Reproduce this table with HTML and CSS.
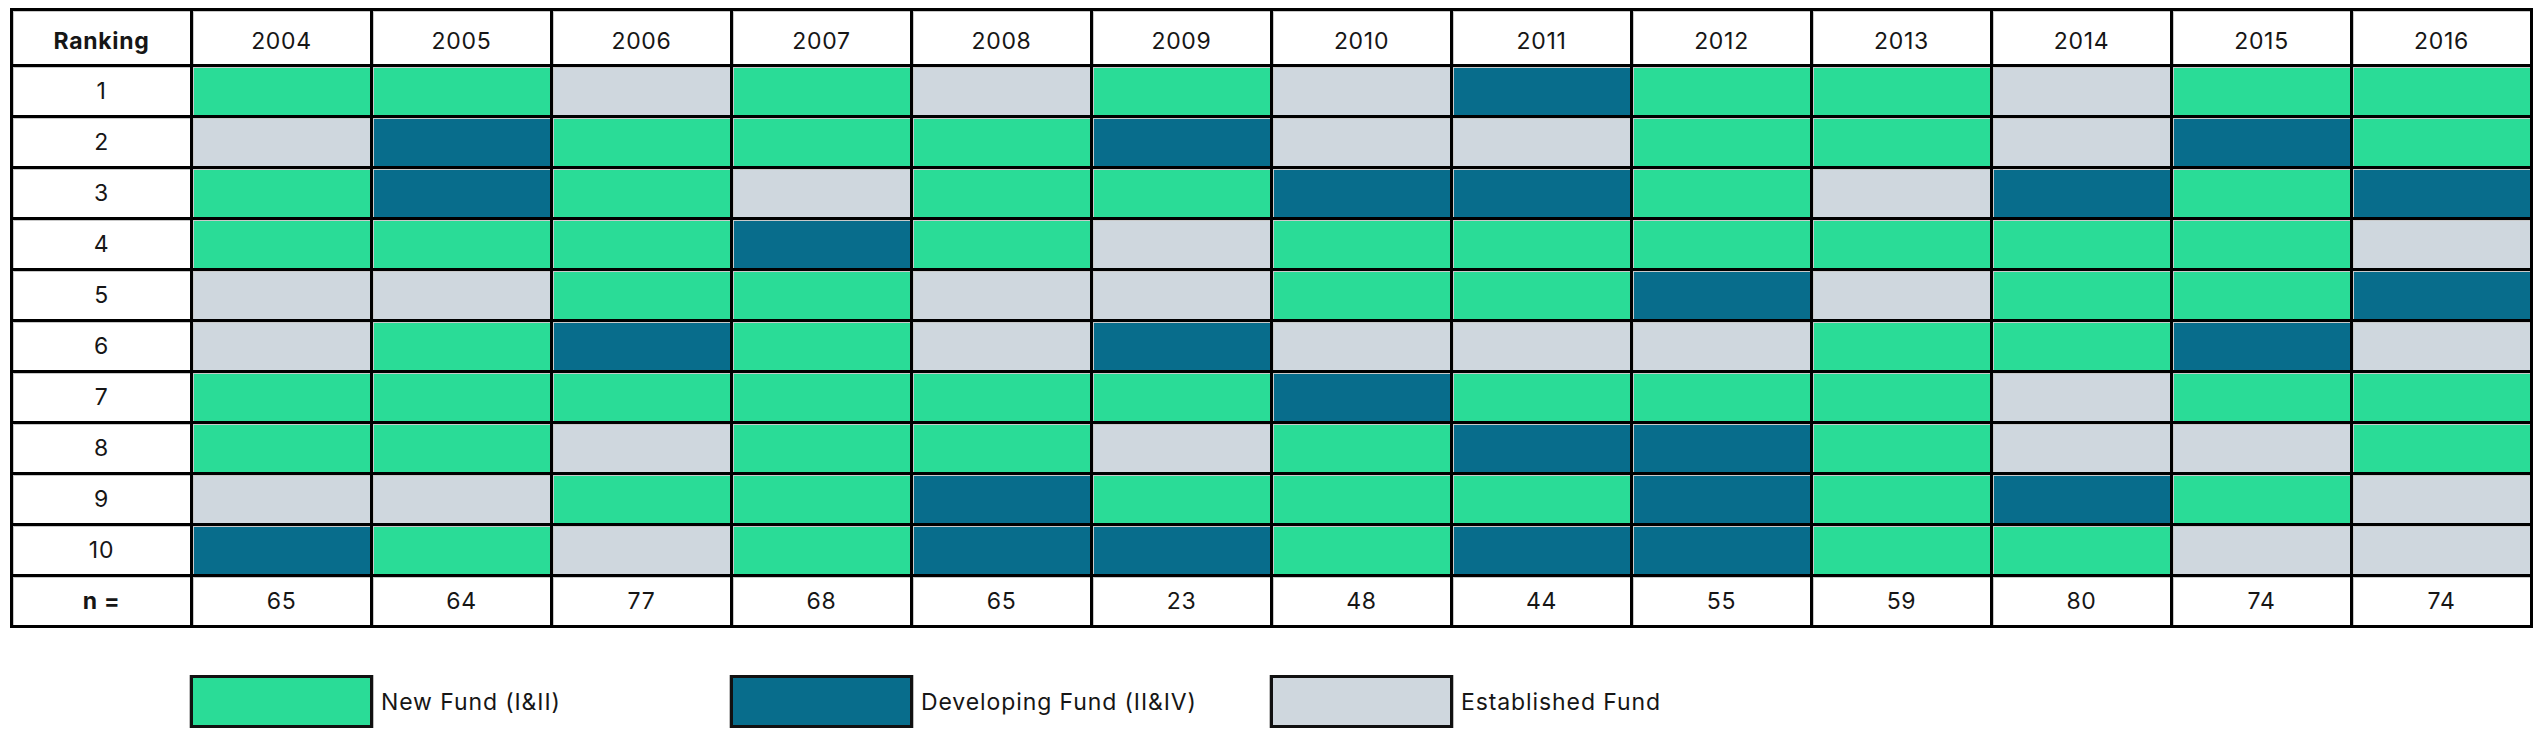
FILE: index.html
```html
<!DOCTYPE html>
<html>
<head>
<meta charset="utf-8">
<link rel="stylesheet" href="styles.css">
</head>
<body>
<div class="chart">
  <div class="grid" id="grid">
    <div class="cell head bold">Ranking</div>
    <div class="cell head">2004</div><div class="cell head">2005</div><div class="cell head">2006</div><div class="cell head">2007</div><div class="cell head">2008</div><div class="cell head">2009</div><div class="cell head">2010</div><div class="cell head">2011</div><div class="cell head">2012</div><div class="cell head">2013</div><div class="cell head">2014</div><div class="cell head">2015</div><div class="cell head">2016</div>

    <div class="cell">1</div>
    <div class="cell g"></div><div class="cell g"></div><div class="cell s"></div><div class="cell g"></div><div class="cell s"></div><div class="cell g"></div><div class="cell s"></div><div class="cell b"></div><div class="cell g"></div><div class="cell g"></div><div class="cell s"></div><div class="cell g"></div><div class="cell g"></div>

    <div class="cell">2</div>
    <div class="cell s"></div><div class="cell b"></div><div class="cell g"></div><div class="cell g"></div><div class="cell g"></div><div class="cell b"></div><div class="cell s"></div><div class="cell s"></div><div class="cell g"></div><div class="cell g"></div><div class="cell s"></div><div class="cell b"></div><div class="cell g"></div>

    <div class="cell">3</div>
    <div class="cell g"></div><div class="cell b"></div><div class="cell g"></div><div class="cell s"></div><div class="cell g"></div><div class="cell g"></div><div class="cell b"></div><div class="cell b"></div><div class="cell g"></div><div class="cell s"></div><div class="cell b"></div><div class="cell g"></div><div class="cell b"></div>

    <div class="cell">4</div>
    <div class="cell g"></div><div class="cell g"></div><div class="cell g"></div><div class="cell b"></div><div class="cell g"></div><div class="cell s"></div><div class="cell g"></div><div class="cell g"></div><div class="cell g"></div><div class="cell g"></div><div class="cell g"></div><div class="cell g"></div><div class="cell s"></div>

    <div class="cell">5</div>
    <div class="cell s"></div><div class="cell s"></div><div class="cell g"></div><div class="cell g"></div><div class="cell s"></div><div class="cell s"></div><div class="cell g"></div><div class="cell g"></div><div class="cell b"></div><div class="cell s"></div><div class="cell g"></div><div class="cell g"></div><div class="cell b"></div>

    <div class="cell">6</div>
    <div class="cell s"></div><div class="cell g"></div><div class="cell b"></div><div class="cell g"></div><div class="cell s"></div><div class="cell b"></div><div class="cell s"></div><div class="cell s"></div><div class="cell s"></div><div class="cell g"></div><div class="cell g"></div><div class="cell b"></div><div class="cell s"></div>

    <div class="cell">7</div>
    <div class="cell g"></div><div class="cell g"></div><div class="cell g"></div><div class="cell g"></div><div class="cell g"></div><div class="cell g"></div><div class="cell b"></div><div class="cell g"></div><div class="cell g"></div><div class="cell g"></div><div class="cell s"></div><div class="cell g"></div><div class="cell g"></div>

    <div class="cell">8</div>
    <div class="cell g"></div><div class="cell g"></div><div class="cell s"></div><div class="cell g"></div><div class="cell g"></div><div class="cell s"></div><div class="cell g"></div><div class="cell b"></div><div class="cell b"></div><div class="cell g"></div><div class="cell s"></div><div class="cell s"></div><div class="cell g"></div>

    <div class="cell">9</div>
    <div class="cell s"></div><div class="cell s"></div><div class="cell g"></div><div class="cell g"></div><div class="cell b"></div><div class="cell g"></div><div class="cell g"></div><div class="cell g"></div><div class="cell b"></div><div class="cell g"></div><div class="cell b"></div><div class="cell g"></div><div class="cell s"></div>

    <div class="cell">10</div>
    <div class="cell b"></div><div class="cell g"></div><div class="cell s"></div><div class="cell g"></div><div class="cell b"></div><div class="cell b"></div><div class="cell g"></div><div class="cell b"></div><div class="cell b"></div><div class="cell g"></div><div class="cell g"></div><div class="cell s"></div><div class="cell s"></div>

    <div class="cell bold">n =</div>
    <div class="cell">65</div><div class="cell">64</div><div class="cell">77</div><div class="cell">68</div><div class="cell">65</div><div class="cell">23</div><div class="cell">48</div><div class="cell">44</div><div class="cell">55</div><div class="cell">59</div><div class="cell">80</div><div class="cell">74</div><div class="cell">74</div>
  </div>

  <div class="legend">
    <div class="item"><div class="swatch g"></div><span class="label">New Fund (I&amp;II)</span></div>
    <div class="item"><div class="swatch b"></div><span class="label">Developing Fund (II&amp;IV)</span></div>
    <div class="item"><div class="swatch s"></div><span class="label">Established Fund</span></div>
  </div>
</div>
</body>
</html>
```

FILE: styles.css
```css
html, body {
  margin: 0;
  padding: 0;
  background: #ffffff;
}

body {
  font-family: "Inter", "Open Sans", "Liberation Sans", sans-serif;
  color: #161616;
}

.chart {
  padding: 8px 0 0 10px;
}

.grid {
  display: grid;
  grid-template-columns: repeat(14, 177px);
  grid-template-rows: 53px repeat(11, 48px);
  gap: 3px;
  padding: 3px;
  background: #000000;
  width: max-content;
}

.cell {
  background: #ffffff;
  display: flex;
  align-items: center;
  justify-content: center;
  font-size: 23px;
  letter-spacing: 0.7px;
  box-shadow: inset 1px 1px 0 #c9c9c9;
}

.head {
  padding-top: 6px;
  box-sizing: border-box;
}

.bold {
  font-weight: 700;
}

.g { background: #2adc97; }
.b { background: #086d8c; }
.s { background: #cfd7de; }

.legend {
  display: flex;
  margin-top: 47px;
  padding-left: 180px;
}

.item {
  width: 540px;
  display: flex;
  align-items: center;
  gap: 8px;
}

.swatch {
  width: 177px;
  height: 47px;
  border: 3px solid #111111;
  box-shadow: 0 1px 0 1px #bdbdbd;
}

.label {
  font-size: 23px;
  letter-spacing: 0.9px;
  color: #161616;
}
```
